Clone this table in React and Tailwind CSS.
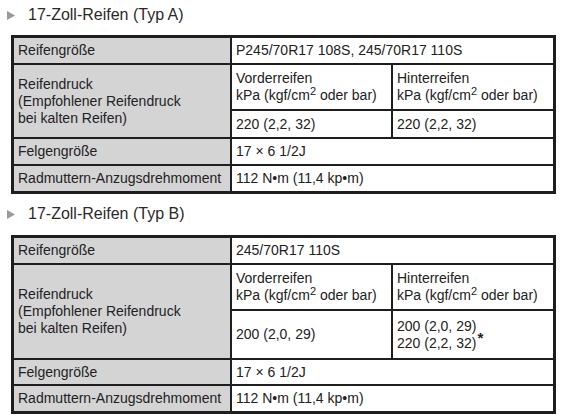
import React from "react";

const Tri = () => (
  <svg width="8" height="9" viewBox="0 0 8 9" className="shrink-0">
    <polygon points="0,0 8,4.5 0,9" fill="#9a9a9a" />
  </svg>
);

const Heading = ({ children }) => (
  <div className="flex items-center h-[20px] pl-[7px] text-[16px] leading-[20px] text-[#2a2a2a]">
    <Tri />
    <span className="ml-[13px]">{children}</span>
  </div>
);

const Cell = ({ children, gray, className = "" }) => (
  <div
    className={
      "flex items-center pl-[4px] text-[14px] leading-[17px] text-[#222] " +
      (gray ? "bg-[#d4d4d4] " : "bg-white ") +
      className
    }
  >
    {children}
  </div>
);

const Unit = () => (
  <span>
    kPa (kgf/cm<sup className="text-[11px] relative top-[-5px]">2</sup> oder bar)
  </span>
);

const TableBlock = ({ size, front, rear, rows }) => (
  <div
    className="ml-[11px] w-[545px] bg-[#1e1e1e] p-[3px] grid gap-[2px] grid-cols-[216px_159px_160px]"
    style={{ gridTemplateRows: rows }}
  >
    <Cell gray>Reifengröße</Cell>
    <Cell className="col-span-2">{size}</Cell>
    <Cell gray className="row-span-2">
      <div>
        Reifendruck
        <br />
        (Empfohlener Reifendruck
        <br />
        bei kalten Reifen)
      </div>
    </Cell>
    <Cell>
      <div>
        Vorderreifen
        <br />
        <Unit />
      </div>
    </Cell>
    <Cell>
      <div>
        Hinterreifen
        <br />
        <Unit />
      </div>
    </Cell>
    <Cell>{front}</Cell>
    <Cell>{rear}</Cell>
    <Cell gray>Felgengröße</Cell>
    <Cell className="col-span-2">17 × 6 1/2J</Cell>
    <Cell gray>Radmuttern-Anzugsdrehmoment</Cell>
    <Cell className="col-span-2">112 N•m (11,4 kp•m)</Cell>
  </div>
);

export default function App() {
  return (
    <div
      className="w-[561px] h-[414px] bg-white pt-[5px] overflow-hidden"
      style={{ fontFamily: '"Liberation Sans", Arial, sans-serif' }}
    >
      <Heading>17-Zoll-Reifen (Typ A)</Heading>
      <div className="mt-[10px]">
        <TableBlock
          size="P245/70R17 108S, 245/70R17 110S"
          front="220 (2,2, 32)"
          rear="220 (2,2, 32)"
          rows="25px 44px 26px 25px 25px"
        />
      </div>
      <div className="mt-[10px]">
        <Heading>17-Zoll-Reifen (Typ B)</Heading>
      </div>
      <div className="mt-[11px]">
        <TableBlock
          size="245/70R17 110S"
          front="200 (2,0, 29)"
          rear={
            <div>
              200 (2,0, 29)
              <br />
              220 (2,2, 32)
              <sup className="text-[15px] font-bold relative top-[-5px] ml-[1px]">*</sup>
            </div>
          }
          rows="25px 44px 47px 24px 25px"
        />
      </div>
    </div>
  );
}
